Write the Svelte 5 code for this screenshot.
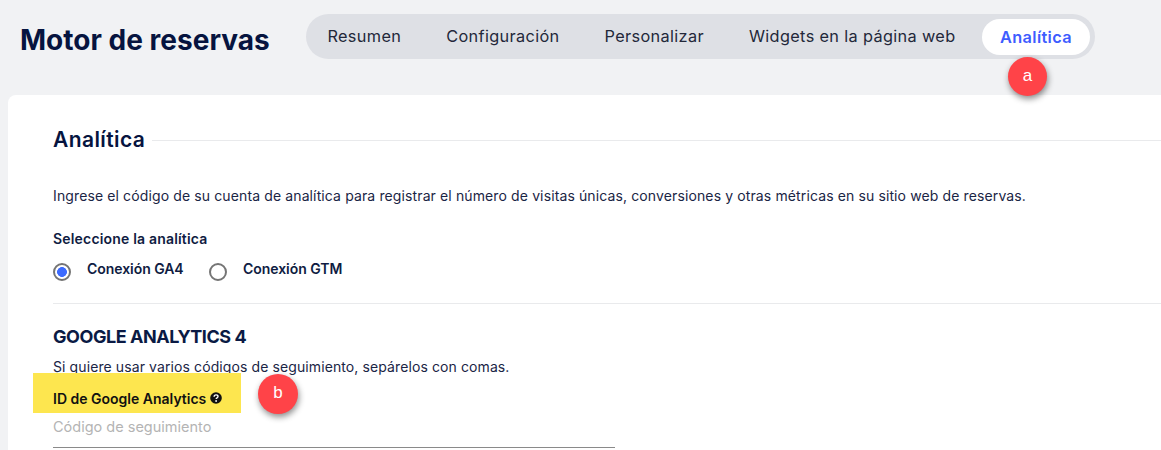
<script>
  const tabs = ['Resumen', 'Configuración', 'Personalizar', 'Widgets en la página web'];
</script>

<div class="page">
  <header class="top">
    <h1>Motor de reservas</h1>
    <nav class="tabs">
      {#each tabs as t}
        <span class="tab">{t}</span>
      {/each}
      <span class="tab active">Analítica</span>
      <span class="mark mark-a">a</span>
    </nav>
  </header>

  <main class="card">
    <div class="legend">
      <h2>Analítica</h2>
      <span class="rule"></span>
    </div>
    <p class="intro">Ingrese el código de su cuenta de analítica para registrar el número de visitas únicas, conversiones y otras métricas en su sitio web de reservas.</p>
    <div class="label">Seleccione la analítica</div>
    <div class="radios">
      <div class="radio">
        <span class="dot on"></span>
        <span class="rtext">Conexión GA4</span>
      </div>
      <div class="radio">
        <span class="dot"></span>
        <span class="rtext">Conexión GTM</span>
      </div>
    </div>
    <hr />
    <h3>GOOGLE ANALYTICS 4</h3>
    <p class="hint">Si quiere usar varios códigos de seguimiento, sepárelos con comas.</p>
    <div class="field-label">
      <span class="hl"></span>
      <span class="fl-text">ID de Google Analytics</span>
      <svg class="help" viewBox="0 0 12 12" width="12" height="12" aria-hidden="true">
        <circle cx="6" cy="6" r="5.8" fill="#111" />
        <path d="M4.1 4.7c0-1.1.8-1.8 2-1.8 1.1 0 1.9.7 1.9 1.6 0 .7-.4 1-1 1.4-.5.3-.8.5-.8 1.1" fill="none" stroke="#fff" stroke-width="1.4" />
        <circle cx="6.1" cy="9" r=".9" fill="#fff" />
      </svg>
      <span class="mark mark-b">b</span>
    </div>
    <div class="input">Código de seguimiento</div>
  </main>
</div>

<style>
  :global(body) {
    margin: 0;
    background: #f1f2f4;
    overflow: hidden;
  }
  .page {
    height: 450px;
    overflow: hidden;
    font-family: Inter, "Open Sans", sans-serif;
    color: #0a1a44;
  }
  .top {
    height: 95px;
    box-sizing: border-box;
    padding: 14px 0 0 20px;
    display: flex;
    align-items: flex-start;
  }
  h1 {
    margin: 9px 0 0;
    width: 286px;
    flex: none;
    font-size: 28px;
    line-height: 34px;
    font-weight: 700;
    letter-spacing: 0.02px;
    color: #06143f;
    white-space: nowrap;
  }
  .tabs {
    position: relative;
    width: 789px;
    height: 45px;
    box-sizing: border-box;
    padding: 5px 5px 5px 0;
    display: flex;
    justify-content: flex-end;
    background: #dee0e5;
    border-radius: 23px;
  }
  .tab {
    flex: none;
    display: flex;
    align-items: center;
    padding: 0 22.5px;
    font-size: 16.3px;
    letter-spacing: 0.35px;
    color: #23283a;
    white-space: nowrap;
    height: 36px;
    margin-top: -1px;
  }
  .tab.active {
    background: #fff;
    color: #3d5cff;
    font-weight: 600;
    border-radius: 18px;
    width: 108px;
    box-sizing: border-box;
    padding: 0;
    justify-content: center;
    margin-top: 0;
    margin-left: 4px;
  }
  .mark {
    position: absolute;
    width: 40px;
    height: 40px;
    border-radius: 50%;
    background: #ff4348;
    color: #fff;
    font-family: "Liberation Sans", sans-serif;
    font-size: 17px;
    line-height: 38px;
    text-align: center;
    box-shadow: 1px 3px 6px rgba(0, 0, 0, 0.45);
  }
  .mark-a {
    left: 702px;
    top: 43px;
    width: 39px;
    height: 39px;
    z-index: 2;
  }
  .card {
    margin-left: 8px;
    height: 355px;
    box-sizing: border-box;
    padding: 33px 0 0 45px;
    background: #fff;
    border-top-left-radius: 8px;
  }
  .legend {
    display: flex;
    align-items: center;
    height: 24px;
    gap: 7px;
  }
  h2 {
    margin: 0;
    font-size: 21px;
    line-height: 24px;
    font-weight: 600;
    letter-spacing: 0.4px;
    color: #06143f;
  }
  .rule {
    flex: 1;
    height: 1px;
    background: #e9eaec;
  }
  .intro {
    margin: 35px 0 0;
    font-size: 14px;
    letter-spacing: 0.12px;
    line-height: 18px;
    color: #1a2545;
    white-space: nowrap;
  }
  .label {
    margin-top: 25px;
    font-size: 14px;
    letter-spacing: 0.18px;
    line-height: 18px;
    font-weight: 600;
    color: #0f1c42;
  }
  .radios {
    display: flex;
    margin-top: 12px;
    height: 24px;
  }
  .radio {
    display: flex;
    align-items: flex-start;
  }
  .radio:first-child {
    width: 156px;
  }
  .dot {
    width: 18px;
    height: 18px;
    box-sizing: border-box;
    border: 2px solid #757575;
    border-radius: 50%;
    margin-top: 3px;
    background: #fff;
  }
  .dot.on {
    background: radial-gradient(circle, #3d6bff 0 4.6px, #fff 5.2px);
  }
  .rtext {
    margin-left: 16px;
    font-size: 14px;
    line-height: 18px;
    font-weight: 600;
    letter-spacing: -0.05px;
    color: #0f1c42;
  }
  hr {
    margin: 19px 0 0;
    border: 0;
    height: 1px;
    background: #e9eaec;
  }
  h3 {
    margin: 21px 0 0;
    font-size: 18px;
    letter-spacing: -0.45px;
    line-height: 24px;
    font-weight: 700;
    color: #0a1a44;
  }
  .hint {
    margin: 9px 0 0;
    font-size: 14px;
    letter-spacing: 0.1px;
    line-height: 18px;
    color: #1a2545;
    white-space: nowrap;
  }
  .field-label {
    position: relative;
    display: flex;
    align-items: center;
    gap: 4px;
    margin-top: 12px;
    height: 20px;
  }
  .hl {
    position: absolute;
    left: -20px;
    top: -15px;
    width: 208px;
    height: 40px;
    background: #fde64f;
  }
  .fl-text {
    position: relative;
    font-size: 14px;
    font-weight: 600;
    color: #111;
    white-space: nowrap;
  }
  .help {
    position: relative;
  }
  .mark-b {
    left: 205px;
    top: -14px;
  }
  .input {
    margin-top: 9px;
    width: 562px;
    height: 31px;
    box-sizing: border-box;
    border-bottom: 1px solid #8a8a8a;
    font-size: 14.5px;
    line-height: 20px;
    color: #b4b4b4;
  }
</style>
